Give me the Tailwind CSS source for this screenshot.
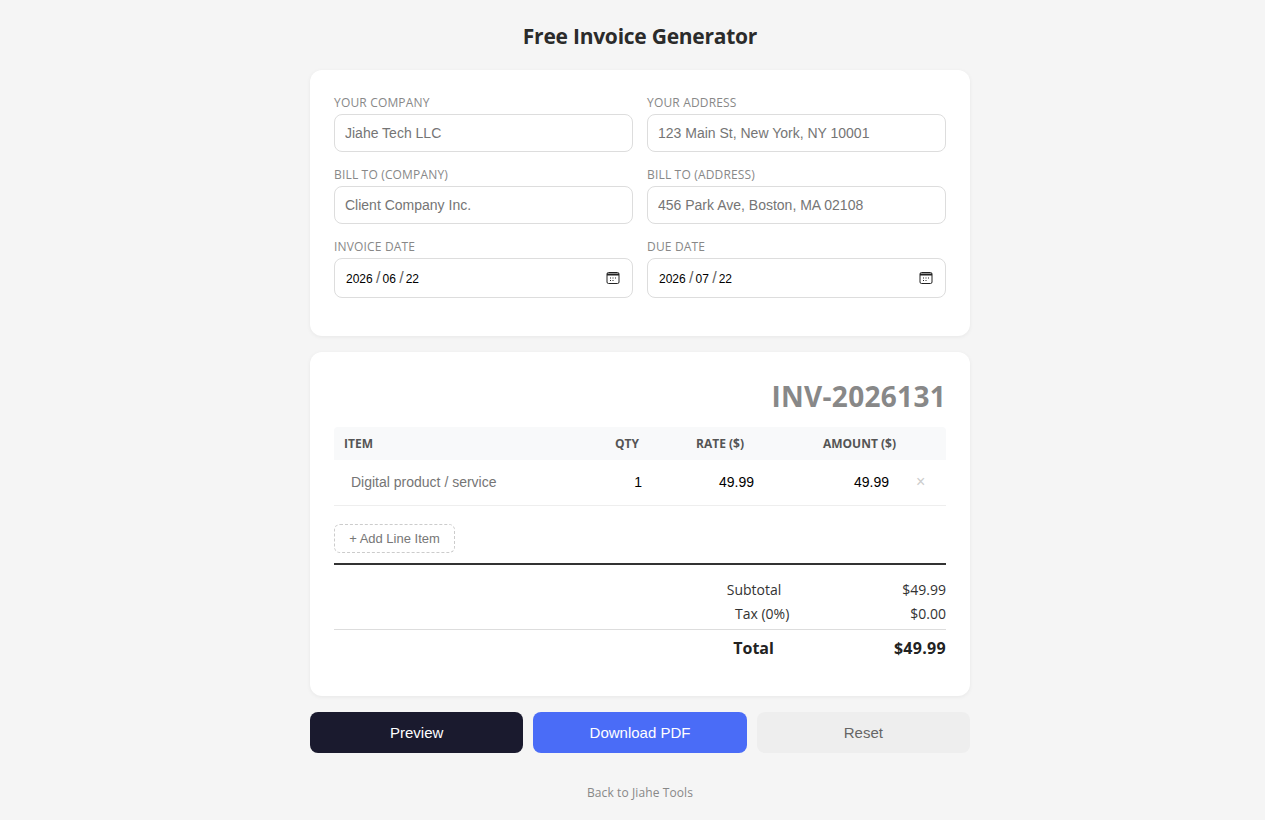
<!DOCTYPE html>
<html lang="en">
<head>
<meta charset="utf-8">
<title>Free Invoice Generator</title>
<script src="https://cdn.jsdelivr.net/npm/@tailwindcss/browser@4"></script>
</head>
<body class="m-0 bg-[#f5f5f5] font-['Open_Sans','Noto_Sans',sans-serif] text-[#333]">
<main class="ml-[310px] w-[660px] pt-5">
  <h1 class="mb-[18px] h-[32px] text-center text-[21px] leading-[32px] font-bold tracking-[-0.25px] text-[#2b2b2b]">Free Invoice Generator</h1>

  <section class="mb-4 h-[266px] rounded-xl bg-white px-6 pt-6 shadow-[0_1px_4px_rgba(0,0,0,0.06)]">
    <div class="grid grid-cols-2 gap-x-[14px] gap-y-[14px]">
      <label class="block">
        <span class="mb-1 block h-4 pt-px text-xs leading-4 tracking-[0.17px] text-[#888]">YOUR COMPANY</span>
        <input type="text" placeholder="Jiahe Tech LLC" class="block h-[38px] w-full rounded-lg border border-[#ddd] px-[10px] font-['Liberation_Sans',sans-serif] text-sm placeholder:text-[#757575]">
      </label>
      <label class="block">
        <span class="mb-1 block h-4 pt-px text-xs leading-4 tracking-[0.17px] text-[#888]">YOUR ADDRESS</span>
        <input type="text" placeholder="123 Main St, New York, NY 10001" class="block h-[38px] w-full rounded-lg border border-[#ddd] px-[10px] font-['Liberation_Sans',sans-serif] text-sm placeholder:text-[#757575]">
      </label>
      <label class="block">
        <span class="mb-1 block h-4 pt-px text-xs leading-4 tracking-[0.17px] text-[#888]">BILL TO (COMPANY)</span>
        <input type="text" placeholder="Client Company Inc." class="block h-[38px] w-full rounded-lg border border-[#ddd] px-[10px] font-['Liberation_Sans',sans-serif] text-sm placeholder:text-[#757575]">
      </label>
      <label class="block">
        <span class="mb-1 block h-4 pt-px text-xs leading-4 tracking-[0.17px] text-[#888]">BILL TO (ADDRESS)</span>
        <input type="text" placeholder="456 Park Ave, Boston, MA 02108" class="block h-[38px] w-full rounded-lg border border-[#ddd] px-[10px] font-['Liberation_Sans',sans-serif] text-sm placeholder:text-[#757575]">
      </label>
      <div>
        <span class="mb-1 block h-4 pt-px text-xs leading-4 tracking-[0.17px] text-[#888]">INVOICE DATE</span>
        <div class="flex h-10 items-center justify-between rounded-lg border border-[#ddd] pr-[12px] pl-[11px] text-black">
          <span class="font-['Liberation_Sans',sans-serif] text-xs">2026 <span class="pr-0.5 text-base leading-none text-[#666]">/</span>06 <span class="pr-0.5 text-base leading-none text-[#666]">/</span>22</span>
          <svg class="h-[14px] w-[14px]" viewBox="0 0 14 14" fill="none" stroke="#222" stroke-width="1"><rect x="1" y="1.5" width="12" height="11" rx="1.5"/><path d="M1 3.5h12" stroke-width="2"/><path d="M4 7h1M6.5 7h1M9 7h1M4 9.5h1M6.5 9.5h1" stroke-width="1.2"/></svg>
        </div>
      </div>
      <div>
        <span class="mb-1 block h-4 pt-px text-xs leading-4 tracking-[0.17px] text-[#888]">DUE DATE</span>
        <div class="flex h-10 items-center justify-between rounded-lg border border-[#ddd] pr-[12px] pl-[11px] text-black">
          <span class="font-['Liberation_Sans',sans-serif] text-xs">2026 <span class="pr-0.5 text-base leading-none text-[#666]">/</span>07 <span class="pr-0.5 text-base leading-none text-[#666]">/</span>22</span>
          <svg class="h-[14px] w-[14px]" viewBox="0 0 14 14" fill="none" stroke="#222" stroke-width="1"><rect x="1" y="1.5" width="12" height="11" rx="1.5"/><path d="M1 3.5h12" stroke-width="2"/><path d="M4 7h1M6.5 7h1M9 7h1M4 9.5h1M6.5 9.5h1" stroke-width="1.2"/></svg>
        </div>
      </div>
    </div>
  </section>

  <section class="mb-4 h-[344px] rounded-xl bg-white px-6 pt-[25px] shadow-[0_1px_4px_rgba(0,0,0,0.06)]">
    <div class="mb-3 h-[38px] text-right text-[28px] leading-[38px] font-bold tracking-[0.3px] text-[#888]">INV-2026131</div>
    <div class="flex h-[33px] items-center rounded-t bg-[#f8f9fa] text-xs font-bold text-[#555]">
      <span class="w-[246px] pl-[10px]">ITEM</span>
      <span class="w-[59px] text-right">QTY</span>
      <span class="w-[105px] text-right">RATE ($)</span>
      <span class="w-[152px] text-right">AMOUNT ($)</span>
    </div>
    <div class="flex h-[46px] items-center border-b border-[#eee] pb-0.5 font-['Liberation_Sans',sans-serif] text-sm text-black">
      <span class="w-[248px] pl-[17px] text-[#757575]">Digital product / service</span>
      <span class="w-[60px] text-right">1</span>
      <span class="w-[112px] text-right">49.99</span>
      <span class="w-[135px] text-right">49.99</span>
      <span class="ml-[27px] text-base leading-none text-[#ccc]">×</span>
    </div>
    <button class="mt-[18px] mb-[10px] block h-[29px] w-[121px] rounded-md border border-dashed border-[#ccc] bg-white font-['Liberation_Sans',sans-serif] text-[13px] text-[#777]">+ Add Line Item</button>
    <div class="border-t-2 border-[#333] pt-[13px] text-sm text-[#333]">
      <div class="flex h-6 items-center justify-end gap-x-[121px]"><span>Subtotal</span><span>$49.99</span></div>
      <div class="flex h-6 items-center justify-end gap-x-[121px]"><span>Tax (0%)</span><span>$0.00</span></div>
    </div>
    <div class="mt-[3px] flex h-[37px] items-center justify-end gap-x-[120px] border-t border-[#ddd] text-base font-bold text-[#222]"><span>Total</span><span class="tracking-[0.3px]">$49.99</span></div>
  </section>

  <div class="grid grid-cols-3 gap-x-[10px] font-['Liberation_Sans',sans-serif] text-[15px]">
    <button class="h-[41px] rounded-lg bg-[#1a1a2e] pt-0.5 text-white">Preview</button>
    <button class="h-[41px] rounded-lg bg-[#4a6cf7] pt-0.5 text-white">Download PDF</button>
    <button class="h-[41px] rounded-lg bg-[#eee] pt-0.5 text-[#666]">Reset</button>
  </div>

  <div class="mt-8 text-center text-xs leading-4 tracking-[0.1px] text-[#888]"><a href="#">Back to Jiahe Tools</a></div>
</main>
</body>
</html>
